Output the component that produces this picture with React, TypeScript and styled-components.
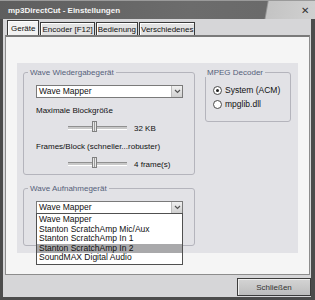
import styled, { createGlobalStyle } from "styled-components";

const Global = createGlobalStyle`
  html, body { margin: 0; padding: 0; background: #d4d4d6; }
  body { font-family: "Liberation Sans", Arial, sans-serif; font-size: 8px; color: #111; }
`;

const Window = styled.div`
  width: 315px;
  height: 300px;
  display: flex;
  flex-direction: column;
  overflow: hidden;
`;

const TitleBar = styled.div`
  height: 19px;
  flex: none;
  display: flex;
  align-items: center;
  background: linear-gradient(100deg, #5e5e5e 0%, #6c6c6c 60%, #6a6a6a 84%, #c4c4c4 84.6%, #d0d0d0 100%);
  border-top: 1px solid #9a9a9a;
  box-sizing: border-box;
`;

const Title = styled.span`
  padding-left: 8px;
  font-size: 8px;
  font-weight: bold;
  color: #f6f6f6;
  flex: 1;
`;

const Close = styled.span`
  width: 14px;
  font-size: 10px;
  color: #333;
  font-family: "DejaVu Sans", sans-serif;
`;

const Frame = styled.div`
  flex: 1;
  display: flex;
  flex-direction: column;
  border-left: 3px solid #4c4c4c;
  border-right: 4px solid #4c4c4c;
  border-bottom: 3px solid #4c4c4c;
  background: #d6d6d8;
`;

const TabRow = styled.div`
  display: flex;
  align-items: flex-end;
  padding: 1px 0 0 4px;
  height: 15px;
`;

const Tab = styled.div<{ $active?: boolean }>`
  height: ${(p) => (p.$active ? 15 : 13)}px;
  padding: 0 ${(p) => (p.$active ? 3 : 1)}px;
  margin-right: 1px;
  display: flex;
  align-items: center;
  box-sizing: border-box;
  border: 1px solid #3a3a3a;
  border-bottom: none;
  background: ${(p) => (p.$active ? "#f2f2f2" : "#e2e2e2")};
  box-shadow: inset 1px 1px 0 #fff;
  white-space: nowrap;
`;

const Panel = styled.div`
  flex: none;
  height: 240px;
  margin: 0 1px 0 2px;
  box-sizing: border-box;
  border: 1px solid #8c8c8c;
  border-top: 2px solid #7a7a7a;
  background: #f5f5f5;
  padding: 26px 11px 21px 11px;
  display: flex;
`;

const Inner = styled.div`
  flex: 1;
  background: #e2e2e6;
  padding: 5px 6px 7px 6px;
  display: flex;
  gap: 10px;
  align-items: flex-start;
`;

const Column = styled.div`
  display: flex;
  flex-direction: column;
  gap: 9px;
  width: 172px;
`;

const Group = styled.fieldset<{ $h: number }>`
  margin: 0;
  padding: 8px 0 0 12px;
  height: ${(p) => p.$h}px;
  box-sizing: border-box;
  border: 1px solid #b4b4bc;
  border-radius: 3px;
  position: relative;
  min-width: 0;
`;

const Legend = styled.legend`
  padding: 0 2px;
  margin-left: -8px;
  color: #55617a;
  font-size: 8px;
  line-height: 9px;
`;

const SideGroup = styled(Group)`
  width: 86px;
  padding: 5px 0 0 7px;
`;

const Select = styled.div`
  width: 147px;
  height: 13px;
  box-sizing: border-box;
  border: 1px solid #7a7a7a;
  background: #fff;
  display: flex;
  align-items: center;
  padding-left: 2px;
  position: relative;
`;

const SelectText = styled.span`
  flex: 1;
  line-height: 11px;
  font-size: 8.5px;
`;

const Arrow = styled.div`
  width: 10px;
  height: 11px;
  background: linear-gradient(#f0f0f0, #d0d0d0);
  border-left: 1px solid #bcbcbc;
  display: flex;
  align-items: center;
  justify-content: center;
`;

const Label = styled.div`
  margin-top: 8px;
  line-height: 10px;
`;

const SliderRow = styled.div`
  display: flex;
  align-items: center;
  height: 12px;
  margin-top: 6px;
  padding-left: 32px;
  gap: 7px;
`;

const Track = styled.div`
  width: 59px;
  height: 2px;
  border-top: 1px solid #909090;
  border-bottom: 1px solid #fff;
  background: #c8c8c8;
  position: relative;
`;

const Thumb = styled.div`
  position: absolute;
  left: 24px;
  top: -6px;
  width: 5px;
  height: 11px;
  box-sizing: border-box;
  border: 1px solid #808080;
  background: repeating-linear-gradient(90deg, #e8e8e8 0 1px, #9a9a9a 1px 2px);
`;

const Radio = styled.div`
  display: flex;
  align-items: center;
  gap: 3px;
  height: 12px;
  margin-top: 2px;
  font-size: 8.5px;
`;

const Circle = styled.div<{ $on?: boolean }>`
  width: 9px;
  height: 9px;
  border-radius: 50%;
  box-sizing: border-box;
  border: 1px solid #4a4a4a;
  background: #fff;
  display: flex;
  align-items: center;
  justify-content: center;
  &::after {
    content: "";
    width: 3px;
    height: 3px;
    border-radius: 50%;
    background: ${(p) => (p.$on ? "#222" : "transparent")};
  }
`;

const List = styled.div`
  position: absolute;
  left: -1px;
  top: 11px;
  width: 147px;
  box-sizing: border-box;
  border: 1px solid #505050;
  background: #fff;
  padding: 1px 0;
  z-index: 2;
`;

const Item = styled.div<{ $sel?: boolean }>`
  height: 9.5px;
  line-height: 9.5px;
  padding-left: 2px;
  font-size: 8.5px;
  background: ${(p) => (p.$sel ? "#a9a9ab" : "transparent")};
`;

const Footer = styled.div`
  flex: 1;
  display: flex;
  justify-content: flex-end;
  align-items: center;
  padding-top: 2px;
`;

const Button = styled.button`
  width: 74px;
  height: 18px;
  font-family: inherit;
  font-size: 8px;
  color: #333;
  border: 1px solid #3c3c3c;
  background: linear-gradient(#d4d4d4, #bdbdbd);
  box-shadow: inset 1px 1px 0 #eee;
  padding: 0;
`;

const devices = [
  "Wave Mapper",
  "Stanton ScratchAmp Mic/Aux",
  "Stanton ScratchAmp In 1",
  "Stanton ScratchAmp In 2",
  "SoundMAX Digital Audio",
];

const Chevron = () => (
  <svg width="7" height="5" viewBox="0 0 7 5">
    <path d="M1 1 L3.5 3.5 L6 1" stroke="#555" strokeWidth="1.2" fill="none" />
  </svg>
);

export default function App() {
  return (
    <Window>
      <Global />
      <TitleBar>
        <Title>mp3DirectCut - Einstellungen</Title>
        <Close>✕</Close>
      </TitleBar>
      <Frame>
        <TabRow>
          <Tab $active>Geräte</Tab>
          <Tab>Encoder [F12]</Tab>
          <Tab>Bedienung</Tab>
          <Tab>Verschiedenes</Tab>
        </TabRow>
        <Panel>
          <Inner>
            <Column>
              <Group $h={107}>
                <Legend>Wave Wiedergabegerät</Legend>
                <Select>
                  <SelectText>Wave Mapper</SelectText>
                  <Arrow>
                    <Chevron />
                  </Arrow>
                </Select>
                <Label>Maximale Blockgröße</Label>
                <SliderRow>
                  <Track>
                    <Thumb />
                  </Track>
                  <span>32 KB</span>
                </SliderRow>
                <Label>Frames/Block (schneller...robuster)</Label>
                <SliderRow>
                  <Track>
                    <Thumb />
                  </Track>
                  <span>4 frame(s)</span>
                </SliderRow>
              </Group>
              <Group $h={62}>
                <Legend>Wave Aufnahmegerät</Legend>
                <Select>
                  <SelectText>Wave Mapper</SelectText>
                  <Arrow>
                    <Chevron />
                  </Arrow>
                  <List>
                    {devices.map((d, i) => (
                      <Item key={d} $sel={i === 3}>
                        {d}
                      </Item>
                    ))}
                  </List>
                </Select>
              </Group>
            </Column>
            <SideGroup $h={54}>
              <Legend>MPEG Decoder</Legend>
              <Radio>
                <Circle $on />
                <span>System (ACM)</span>
              </Radio>
              <Radio>
                <Circle />
                <span>mpglib.dll</span>
              </Radio>
            </SideGroup>
          </Inner>
        </Panel>
        <Footer>
          <Button>Schließen</Button>
        </Footer>
      </Frame>
    </Window>
  );
}
